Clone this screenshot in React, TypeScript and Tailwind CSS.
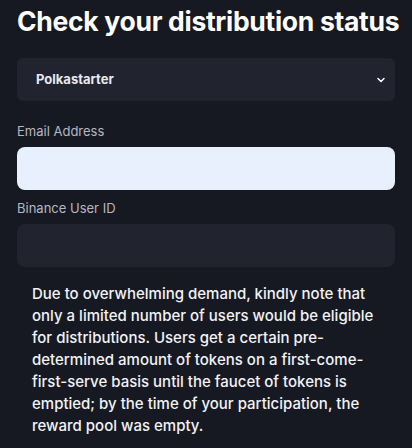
import { ChevronDown } from 'lucide-react';

export default function App() {
    return (
        <div className="min-h-[448px] bg-[#161922] px-[17px] pt-[2px] text-white" style={{ fontFamily: 'Inter, "Liberation Sans", sans-serif' }}>
            <h1 className="whitespace-nowrap text-[26.5px] font-bold leading-[38px] tracking-[-0.3px]">Check your distribution status</h1>

            {/* Project select */}
            <div className="mt-[18px] flex h-[43px] items-center justify-between rounded-md bg-[#21232e] pl-[19px] pr-[8px]">
                <span className="text-[13px] font-bold text-[#e8e9ee]">Polkastarter</span>
                <ChevronDown className="h-[12px] w-[12px] text-white" strokeWidth={3} />
            </div>

            <label className="mt-[21px] block text-[13px] leading-[18px] text-[#b5b8c2]">Email Address</label>
            <div className="mt-[7px] h-[43px] rounded-lg bg-[#e8effd]" />

            <label className="mt-[9px] block text-[13px] leading-[18px] text-[#b5b8c2]">Binance User ID</label>
            <div className="mt-[7px] h-[43px] rounded-lg bg-[#21232e]" />

            <p className="mt-[16px] w-[362px] pl-[15px] text-[15px] font-medium leading-[22px] text-[#f2f3f6]">
                Due to overwhelming demand, kindly note that only a limited number of users would be eligible for distributions. Users get a certain pre-determined amount of tokens on a first-come-first-serve basis until the faucet of tokens is emptied; by the time of your participation, the reward pool was empty.
            </p>
        </div>
    );
}
